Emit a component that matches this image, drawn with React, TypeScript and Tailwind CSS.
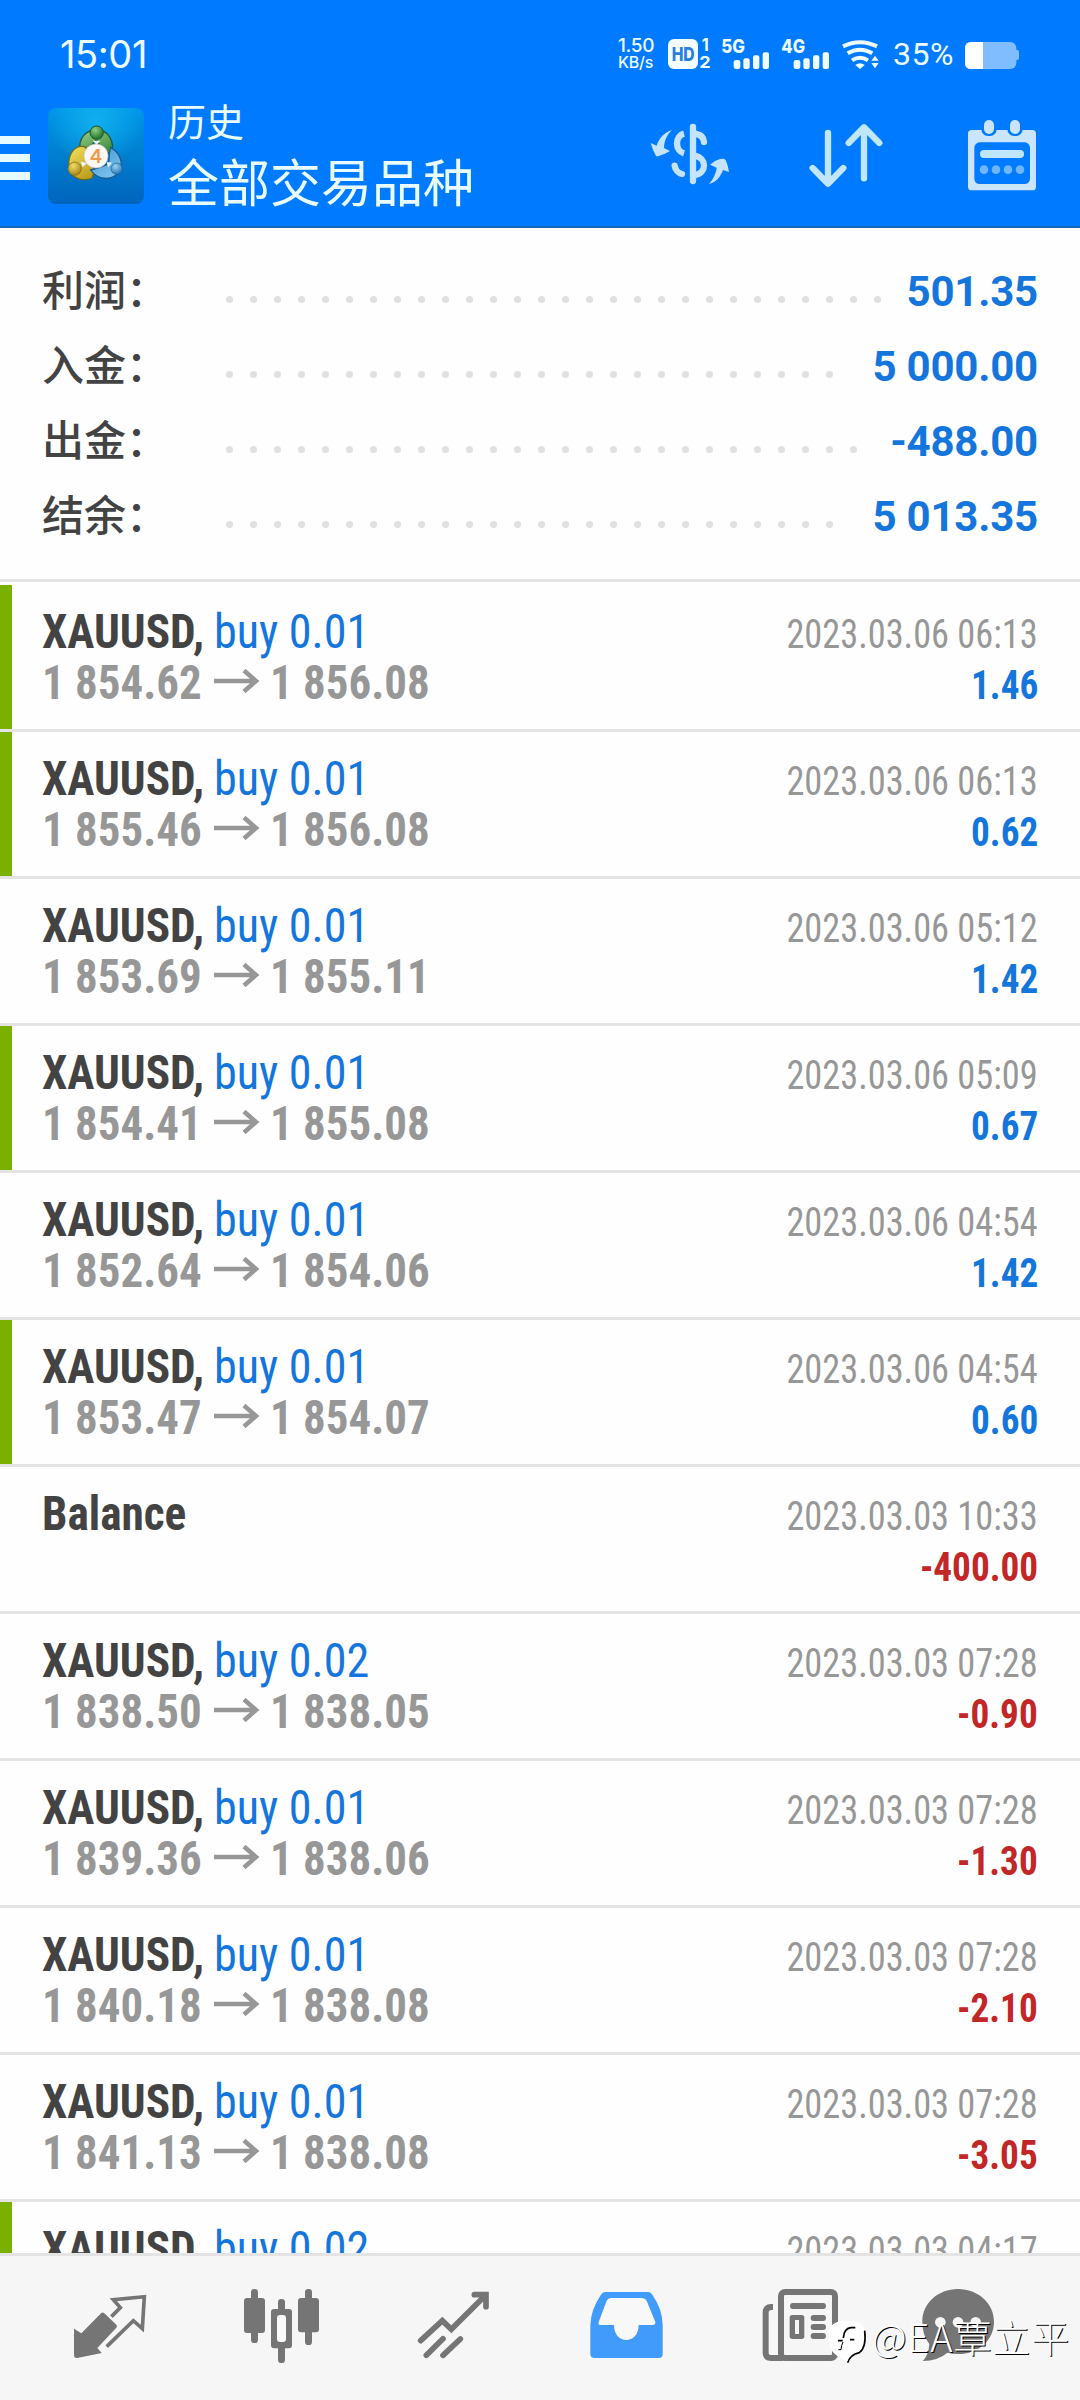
type Deal = {
  volume?: string;
  open?: string;
  close?: string;
  time: string;
  profit: string;
  marked?: boolean;
};

const summary = [
  { label: '利润：', value: '501.35', dots: 28 },
  { label: '入金：', value: '5 000.00', dots: 26 },
  { label: '出金：', value: '-488.00', dots: 27 },
  { label: '结余：', value: '5 013.35', dots: 26 },
];

const deals: Deal[] = [
  { volume: '0.01', open: '1 854.62', close: '1 856.08', time: '2023.03.06 06:13', profit: '1.46', marked: true },
  { volume: '0.01', open: '1 855.46', close: '1 856.08', time: '2023.03.06 06:13', profit: '0.62', marked: true },
  { volume: '0.01', open: '1 853.69', close: '1 855.11', time: '2023.03.06 05:12', profit: '1.42' },
  { volume: '0.01', open: '1 854.41', close: '1 855.08', time: '2023.03.06 05:09', profit: '0.67', marked: true },
  { volume: '0.01', open: '1 852.64', close: '1 854.06', time: '2023.03.06 04:54', profit: '1.42' },
  { volume: '0.01', open: '1 853.47', close: '1 854.07', time: '2023.03.06 04:54', profit: '0.60', marked: true },
  { time: '2023.03.03 10:33', profit: '-400.00' },
  { volume: '0.02', open: '1 838.50', close: '1 838.05', time: '2023.03.03 07:28', profit: '-0.90' },
  { volume: '0.01', open: '1 839.36', close: '1 838.06', time: '2023.03.03 07:28', profit: '-1.30' },
  { volume: '0.01', open: '1 840.18', close: '1 838.08', time: '2023.03.03 07:28', profit: '-2.10' },
  { volume: '0.01', open: '1 841.13', close: '1 838.08', time: '2023.03.03 07:28', profit: '-3.05' },
];

function SignalIcon({ label }: { label: string }) {
  return (
    <svg className="h-8 w-[50px]" viewBox="423 114 150 96" fill="#f0fdff">
      <text x="424" y="160" fontFamily="Inter, sans-serif" fontSize="56" fontWeight="800" textLength="71" lengthAdjust="spacingAndGlyphs">
        {label}
      </text>
      <rect x="461" y="180" width="20" height="27" rx="7" />
      <rect x="490" y="175" width="19" height="32" rx="6" />
      <rect x="519" y="166" width="19" height="41" rx="6" />
      <rect x="548" y="157" width="19" height="50" rx="6" />
    </svg>
  );
}

function StatusBar() {
  return (
    <div className="flex h-[92px] items-start pt-[34px] pl-[60px] font-[Inter] text-[#effcff]">
      <span className="w-[558px] text-[38px] leading-10 tracking-[-0.4px]">15:01</span>
      <div className="mt-[3px] flex w-[50px] flex-col items-start">
        <span className="text-[19px] leading-[18px] font-medium tracking-[-0.3px]">1.50</span>
        <span className="text-[16px] leading-[15px] font-medium tracking-[-0.2px]">KB/s</span>
      </div>
      <svg className="mt-1 h-8 w-[45px]" viewBox="264 114 135 96">
        <rect x="264" y="117" width="90" height="90" rx="18" fill="#f4feff" />
        <text x="275" y="183" fontFamily="Inter, sans-serif" fontSize="58" fontWeight="800" fill="#2a7ee0" textLength="69" lengthAdjust="spacingAndGlyphs">
          HD
        </text>
        <text x="365" y="154" fontFamily="Inter, sans-serif" fontSize="50" fontWeight="700" fill="#f0fdff" textLength="21" lengthAdjust="spacingAndGlyphs">
          1
        </text>
        <text x="358" y="205" fontFamily="Inter, sans-serif" fontSize="48" fontWeight="700" fill="#f0fdff" textLength="34" lengthAdjust="spacingAndGlyphs">
          2
        </text>
      </svg>
      <div className="mt-1 ml-2 flex">
        <SignalIcon label="5G" />
        <div className="ml-2.5">
          <SignalIcon label="4G" />
        </div>
      </div>
      <svg className="mt-1 ml-[10px] h-8 w-[38px]" viewBox="783 114 114 96" fill="none" stroke="#f0fdff" strokeWidth="12">
        <path d="M789 139 Q840 114 891 139" />
        <path d="M803 160 Q840 139 877 160" />
        <path d="M816 181 Q840 166 864 181" />
        <path d="M826 195 Q840 184 854 195 L840 207Z" fill="#f0fdff" stroke="none" />
        <path d="M874 182 L885 167 L896 182Z M874 189 L885 205 L896 189Z" fill="#f0fdff" stroke="none" />
      </svg>
      <span className="ml-[14px] font-[Roboto] text-[32px] leading-10 tracking-[0.5px]">35%</span>
      <svg className="mt-2 ml-[10px] h-7 w-14" viewBox="1155 126 168 84">
        <rect x="1158" y="126" width="154" height="81" rx="18" fill="#80bdff" />
        <path d="M1311 150 h4 q5 0 5 6 v18 q0 6 -5 6 h-4z" fill="#80bdff" />
        <path d="M1176 126 H1212 V207 H1176 Q1158 207 1158 189 V144 Q1158 126 1176 126Z" fill="#fff" />
      </svg>
    </div>
  );
}

function AppLogo() {
  return (
    <svg className="h-24 w-24" viewBox="24 24 288 288">
      <defs>
        <linearGradient id="tile" x1="0" y1="0" x2="0" y2="1">
          <stop offset="0" stopColor="#0096ea" />
          <stop offset="0.45" stopColor="#0080d0" />
          <stop offset="1" stopColor="#0064bd" />
        </linearGradient>
        <radialGradient id="glow" cx="0.5" cy="0.12" r="0.5">
          <stop offset="0" stopColor="#10b0ee" />
          <stop offset="1" stopColor="#10b0ee" stopOpacity="0" />
        </radialGradient>
        <linearGradient id="green" x1="0" y1="0" x2="0.6" y2="1">
          <stop offset="0" stopColor="#9ccf8c" />
          <stop offset="1" stopColor="#3f8f3c" />
        </linearGradient>
        <linearGradient id="yellow" x1="0" y1="0" x2="0.6" y2="1">
          <stop offset="0" stopColor="#f2e25e" />
          <stop offset="1" stopColor="#bf9f1e" />
        </linearGradient>
        <linearGradient id="blue" x1="0" y1="0" x2="0.6" y2="1">
          <stop offset="0" stopColor="#3f93cf" />
          <stop offset="1" stopColor="#7cc2ee" />
        </linearGradient>
        <radialGradient id="greenHead" cx="0.4" cy="0.3" r="0.7">
          <stop offset="0" stopColor="#8fd07c" />
          <stop offset="1" stopColor="#1f7030" />
        </radialGradient>
        <radialGradient id="yellowHead" cx="0.4" cy="0.3" r="0.7">
          <stop offset="0" stopColor="#f0de62" />
          <stop offset="1" stopColor="#a8841c" />
        </radialGradient>
        <radialGradient id="blueHead" cx="0.4" cy="0.3" r="0.7">
          <stop offset="0" stopColor="#9ad2f4" />
          <stop offset="1" stopColor="#2878b8" />
        </radialGradient>
      </defs>
      <rect x="24" y="24" width="288" height="288" rx="24" fill="url(#tile)" />
      <rect x="24" y="24" width="288" height="288" rx="24" fill="url(#glow)" />
      <path d="M120 160 C112 112 140 90 170 90 C204 90 226 122 214 164 L190 150 L168 120 L148 144Z" fill="url(#green)" stroke="#235c34" strokeWidth="4" />
      <path d="M134 140 C100 134 84 166 86 200 C92 236 128 246 156 234 L166 208 L140 184 L146 152Z" fill="url(#yellow)" stroke="#6e6a20" strokeWidth="4" />
      <path d="M212 142 C240 158 252 190 238 216 C216 244 172 240 152 210 L172 204 L206 192 L208 160Z" fill="url(#blue)" stroke="#1c5a90" strokeWidth="4" />
      <path d="M158 122 h24 l-12 12z M122 184 l18 6 -12 12z M200 186 l16 2 -12 14z" fill="#e8f6ff" />
      <circle cx="170" cy="98" r="20" fill="url(#greenHead)" stroke="#1c5a2c" strokeWidth="3" />
      <circle cx="104" cy="206" r="20" fill="url(#yellowHead)" stroke="#7c6818" strokeWidth="2" />
      <circle cx="230" cy="206" r="17" fill="url(#blueHead)" stroke="#1c5a90" strokeWidth="2" />
      <circle cx="168" cy="168" r="36" fill="#fbf8f6" stroke="#c9c4bd" strokeWidth="2" />
      <text x="168" y="188" textAnchor="middle" fontFamily="Inter, sans-serif" fontSize="58" fontWeight="600" fill="#f09a50">
        4
      </text>
    </svg>
  );
}

function Header() {
  return (
    <header className="h-[228px] shrink-0 border-b-2 border-[#1767b8] bg-[#007bff]">
      <StatusBar />
      <div className="flex items-start">
        <div className="mt-11 flex w-[30px] flex-col gap-2.5">
          <div className="h-2 bg-[#e6fbff]" />
          <div className="h-2 bg-[#e6fbff]" />
          <div className="h-2 bg-[#e6fbff]" />
        </div>
        <div className="mt-4 ml-[18px]">
          <AppLogo />
        </div>
        <div className="ml-6 flex w-[477px] flex-col font-['Noto_Sans_CJK_SC'] text-[#e9fcff]">
          <span className="text-[38px] leading-[56px]">历史</span>
          <span className="text-[51px] leading-[64px]">全部交易品种</span>
        </div>
        <svg className="mt-6 h-20 w-[90px]" viewBox="195 348 270 240" fill="none" stroke="#c6e3fc" strokeWidth="19">
          <path d="M339 381 V543" strokeLinecap="round" />
          <path d="M312 401 C284 408 284 452 312 460" />
          <path d="M348 402 C362 404 371 412 372 426" strokeLinecap="round" />
          <path d="M345 467 C380 474 382 518 345 525" />
          <path d="M284 497 C286 510 296 520 306 522" strokeLinecap="round" />
          <path d="M276 391 C255 396 238 412 230 437 L212 429 Q218 450 227 466 Q229 470 236 468 Q256 462 270 453 L252 444 C252 424 262 402 276 391Z" fill="#c6e3fc" stroke="none" />
          <path d="M386 552 C399 540 408 520 410 503 L390 494 Q404 481 420 477 Q433 474 437 480 Q444 496 447 516 L429 510 C422 530 408 548 386 552Z" fill="#c6e3fc" stroke="none" />
        </svg>
        <svg className="mt-6 ml-[70px] h-20 w-[82px]" viewBox="675 348 246 240" fill="none" stroke="#c0e6fc" strokeWidth="19" strokeLinecap="round" strokeLinejoin="round">
          <path d="M744 399 V550 M698 504 L744 551 L790 504" />
          <path d="M852 535 V382 M806 429 L852 382 L898 429" />
        </svg>
        <svg className="mt-6 ml-[76px] h-20 w-[78px]" viewBox="1149 348 234 240" fill="#cbe4ff">
          <rect x="1164" y="390" width="204" height="181" rx="11" />
          <rect x="1183" y="427" width="167" height="125" rx="16" fill="#007bff" />
          <rect x="1204" y="352" width="46" height="56" rx="20" fill="#007bff" />
          <rect x="1282" y="352" width="46" height="56" rx="20" fill="#007bff" />
          <rect x="1212" y="360" width="30" height="42" rx="15" />
          <rect x="1290" y="360" width="30" height="42" rx="15" />
          <rect x="1200" y="450" width="132" height="24" rx="12" fill="#c0e6fc" />
          <g fill="#6fb6ff">
            <circle cx="1212" cy="509" r="13" />
            <circle cx="1248" cy="509" r="13" />
            <circle cx="1284" cy="509" r="13" />
            <circle cx="1320" cy="509" r="13" />
          </g>
        </svg>
      </div>
    </header>
  );
}

function Summary() {
  return (
    <section className="h-[354px] shrink-0 border-b-[3px] border-[#e4e4e4] pt-[22px] pr-[42px] pl-[42px]">
      {summary.map((row) => (
        <div key={row.label} className="flex h-[75px] items-baseline leading-[75px]">
          <span className="w-[184px] font-['Noto_Sans_CJK_SC'] text-[42px] font-medium text-[#434343]">{row.label}</span>
          <div className="mt-[46px] flex gap-[17px] self-start">
            {Array.from({ length: row.dots }, (_, i) => (
              <div key={i} className="size-[7px] rounded-full bg-[#e0e0e0]" />
            ))}
          </div>
          <span className="ml-auto font-[Roboto] text-[42px] font-bold tracking-[-0.2px] text-[#1476dc]">{row.value}</span>
        </div>
      ))}
    </section>
  );
}

function DealRow({ deal }: { deal: Deal }) {
  const loss = deal.profit.startsWith('-');
  return (
    <div className="flex h-[147px] shrink-0 border-b-[3px] border-[#e4e4e4] font-['Roboto_Condensed'] whitespace-nowrap">
      <div className={deal.marked ? 'w-3 bg-[#7ab000]' : 'w-3'} />
      <div className="ml-[30px] flex flex-col pt-[21px] text-[48px] leading-[51px] font-bold">
        <div className="flex">
          <span className="w-[172px] origin-left scale-x-[0.943] text-[#434343]">{deal.volume ? 'XAUUSD,' : 'Balance'}</span>
          {deal.volume && <span className="origin-left scale-x-[0.96] font-normal text-[#1476dc]">buy {deal.volume}</span>}
        </div>
        {deal.open && (
          <div className="flex text-[#979797]">
            <span className="w-[172px] origin-left scale-x-[0.936]">{deal.open}</span>
            <svg className="mt-3 h-6 w-[46px]" viewBox="0 0 46 24" fill="none" stroke="#979797" strokeWidth="4.5">
              <path d="M0 12 H42 M30 1.5 L42 12 L30 22.5" />
            </svg>
            <span className="ml-2.5 origin-left scale-x-[0.936]">{deal.close}</span>
          </div>
        )}
      </div>
      <div className="mr-[42px] ml-auto flex flex-col items-end pt-6 text-[40px] leading-[51px]">
        <span className="origin-right scale-x-[0.908] text-[#979797]">{deal.time}</span>
        <span className={loss ? 'origin-right scale-x-[0.93] font-bold text-[#c22626]' : 'origin-right scale-x-[0.93] font-bold text-[#1476dc]'}>
          {deal.profit}
        </span>
      </div>
    </div>
  );
}

function PartialDealRow() {
  return (
    <div className="flex min-h-0 flex-1 overflow-hidden font-['Roboto_Condensed'] whitespace-nowrap">
      <div className="w-3 bg-[#7ab000]" />
      <div className="ml-[30px] flex pt-[21px] text-[48px] leading-[51px] font-bold">
        <span className="w-[172px] origin-left scale-x-[0.943] text-[#434343]">XAUUSD,</span>
        <span className="origin-left scale-x-[0.96] font-normal text-[#1476dc]">buy 0.02</span>
      </div>
      <span className="mr-[42px] ml-auto origin-right scale-x-[0.908] pt-6 text-[40px] leading-[51px] text-[#979797]">2023.03.03 04:17</span>
    </div>
  );
}

function TabBar() {
  return (
    <nav className="flex h-[147px] shrink-0 items-start border-t-[3px] border-[#e4e4e4] bg-[#f6f6f6] pt-6 pl-[70px]">
      <svg className="h-[90px] w-20" viewBox="60 30 240 270" fill="#757575">
        <path d="M154 129 Q158 126 163 130 L199 164 Q203 168 199 173 L142 234 L155 249 L82 264 Q72 265 72 256 V176 L94 190Z" />
        <path d="M188 136 L211 113 L190 89 L283 80 L277 176 L250 152 L174 226" fill="none" stroke="#757575" strokeWidth="11" strokeLinecap="square" />
      </svg>
      <svg className="ml-[90px] h-[90px] w-[84px]" viewBox="570 30 252 270" fill="#757575">
        <rect x="603" y="57" width="21" height="162" rx="10" />
        <rect x="582" y="84" width="63" height="105" rx="9" />
        <rect x="765" y="57" width="21" height="168" rx="10" />
        <rect x="744" y="84" width="63" height="103" rx="9" />
        <rect x="684" y="87" width="21" height="192" rx="10" />
        <rect x="663" y="117" width="63" height="118" rx="9" />
        <rect x="681" y="135" width="27" height="81" rx="9" fill="#fafafa" />
      </svg>
      <svg className="ml-[91px] h-[90px] w-[77px]" viewBox="1095 30 231 270" fill="none" stroke="#757575" strokeWidth="17" strokeLinecap="round">
        <path d="M1112 212 L1177 152 L1204 178 L1305 77" />
        <path d="M1273 74 H1308 V110" />
        <path d="M1129 256 L1179 206 M1179 256 L1231 207" />
      </svg>
      <svg className="ml-[96px] h-[90px] w-[77px]" viewBox="24 30 231 270">
        <path d="M75 66 H205 Q212 66 218 76 Q247 118 248 165 V252 Q248 264 236 264 H44 Q31 264 31 252 V165 Q33 118 62 76 Q68 66 75 66Z" fill="#409bfa" />
        <path d="M92 84 H186 Q196 84 200 92 L226 156 Q227 165 218 165 H176 C176 225 102 225 102 165 H62 Q53 165 56 156 L80 92 Q84 84 92 84Z" fill="#f8f8f8" />
      </svg>
      <svg className="ml-[95px] h-[90px] w-20" viewBox="540 30 240 270" fill="#757575">
        <g fill="none" stroke="#757575" strokeWidth="18">
          <rect x="603" y="66" width="162" height="198" rx="12" />
          <path d="M579 111 H574 Q557 111 557 128 V248 Q557 264 574 264 H610" />
        </g>
        <rect x="630" y="99" width="108" height="18" rx="9" />
        <path d="M637 135 H665 Q673 135 673 143 V199 Q673 207 665 207 H637 Q629 207 629 199 V143 Q629 135 637 135Z M645 150 V192 H657 V150Z" fillRule="evenodd" />
        <rect x="692" y="135" width="46" height="18" rx="9" />
        <rect x="692" y="162" width="46" height="18" rx="9" />
        <rect x="692" y="189" width="46" height="18" rx="9" />
      </svg>
      <svg className="ml-20 h-[90px] w-[76px]" viewBox="1020 30 228 270" fill="#757575">
        <path d="M1134 57 C1194 57 1242 100 1242 155 C1242 210 1196 252 1134 252 Q1116 252 1102 248 Q1075 272 1028 273 Q1046 256 1048 222 Q1027 196 1027 155 C1027 100 1074 57 1134 57Z" />
        <g fill="#f6f6f6">
          <circle cx="1081" cy="157" r="16" />
          <circle cx="1134" cy="157" r="16" />
          <circle cx="1187" cy="157" r="16" />
        </g>
      </svg>
    </nav>
  );
}

function AuthorTag() {
  return (
    <div className="absolute top-[2316px] left-[828px] flex items-start text-white">
      <svg className="mt-[5px] h-11 w-[42px]" viewBox="24 33 126 132">
        <path d="M26 62 Q34 36 66 34 Q110 30 128 44 Q140 62 138 98 Q134 128 104 136 Q90 144 84 158 L72 150 Q40 136 30 112Z" fill="#fff" />
        <g fill="none" stroke="#000">
          <path d="M70 84 Q72 56 92 53 H106" strokeWidth="5" />
          <path d="M54 92 H68 M90 89 H103" strokeWidth="5" />
          <path d="M55 119 H63 Q64 106 69 96" strokeWidth="3" />
          <path d="M134 62 Q140 112 118 128 Q90 134 83 158" strokeWidth="5" />
        </g>
      </svg>
      <span className="ml-0.5 font-['Noto_Sans_CJK_SC'] text-[38px] leading-10 font-light tracking-[0.9px] whitespace-nowrap [text-shadow:1px_1px_0_#000]">@EA覃立平</span>
    </div>
  );
}

export default function App() {
  return (
    <div className="relative flex h-[2400px] w-[1080px] flex-col overflow-hidden bg-[#fefefe]">
      <Header />
      <Summary />
      <main className="flex min-h-0 flex-1 flex-col overflow-hidden pt-[3px]">
        {deals.map((deal, i) => (
          <DealRow key={i} deal={deal} />
        ))}
        <PartialDealRow />
      </main>
      <TabBar />
      <AuthorTag />
    </div>
  );
}
